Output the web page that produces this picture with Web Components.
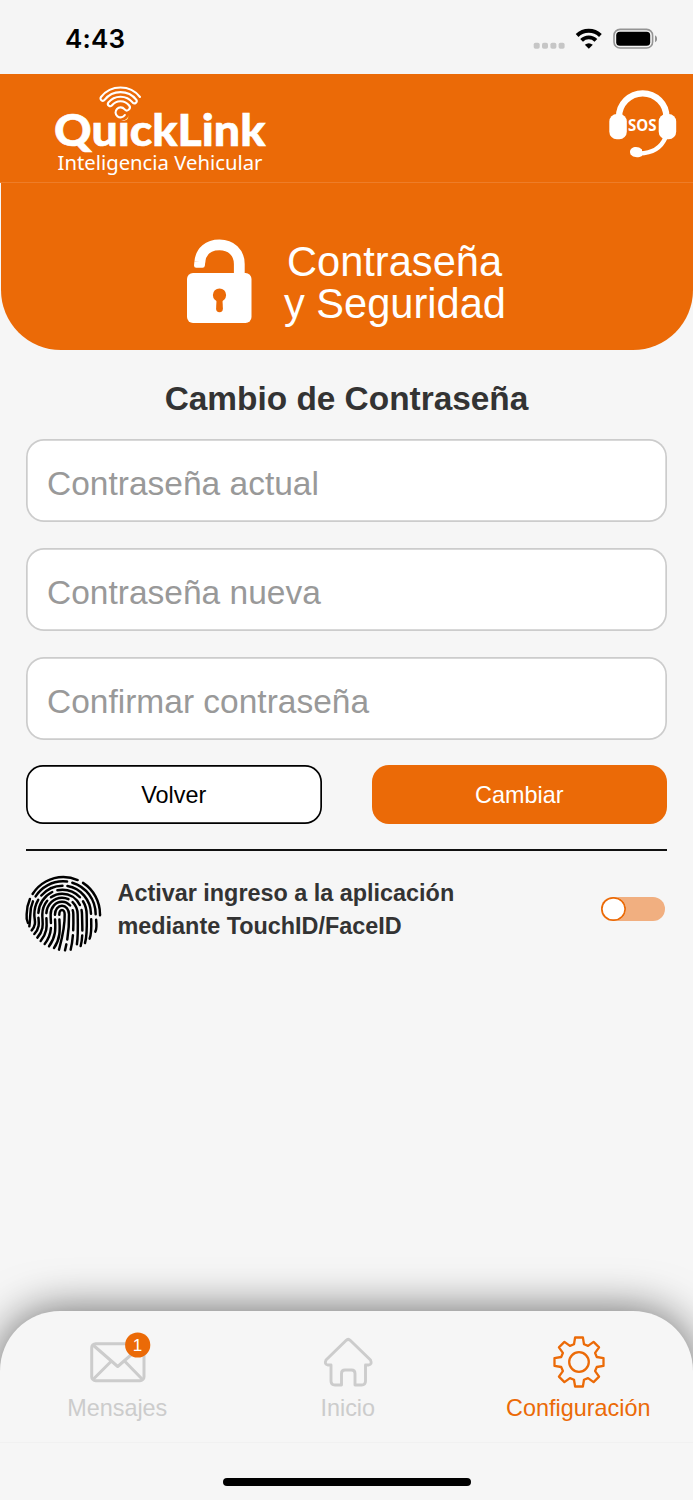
<!DOCTYPE html>
<html lang="es">
<head>
<meta charset="utf-8">
<title>QuickLink</title>
<style>
html,body{margin:0;height:100%}
body{background:#f6f6f6;font-family:"Liberation Sans",Arial,sans-serif;overflow:hidden}
</style>
</head>
<body>
<ql-app></ql-app>
<script>
const define = (name, html) => customElements.define(name, class extends HTMLElement {
  constructor() {
    super();
    const t = document.createElement('template');
    t.innerHTML = html;
    this.attachShadow({mode: 'open'}).append(t.content.cloneNode(true));
  }
});

define('ql-status', `
<style>
:host{display:flex;height:74px;box-sizing:border-box;padding:3px 36px 0 65px;align-items:center;background:#f5f5f5}
.time{font:600 26px/72px Inter,sans-serif;letter-spacing:.2px;color:#000;flex:1}
svg{display:block}
</style>
<div class="time">4:43</div>
<svg width="124" height="24" viewBox="533 26 124 24">
 <g fill="#c6c6c6"><rect x="533.7" y="41.7" width="6" height="6" rx="1.8"/><rect x="542" y="41.7" width="6" height="6" rx="1.8"/><rect x="550.4" y="41.7" width="6" height="6" rx="1.8"/><rect x="558.6" y="41.7" width="6" height="6" rx="1.8"/></g>
 <g fill="none" stroke="#000" stroke-width="3.9"><path d="M577.1 34.5a16.6 16.6 0 0 1 23.3 0"/><path d="M581.6 39.4a10 10 0 0 1 14.3 0"/></g>
 <path d="M588.8 47.8l-4-4q4-3.2 8 0z"/>
 <rect x="614" y="28.4" width="38.6" height="18.6" rx="6" fill="none" stroke="#949494" stroke-width="1.6"/>
 <rect x="616.2" y="30.8" width="34" height="14" rx="3.6"/>
 <path d="M655 34.2q2.2 1.2 2.2 3.5t-2.2 3.5z" fill="#949494"/>
</svg>`);

define('ql-header', `
<style>
:host{display:flex;height:109px;box-sizing:border-box;justify-content:space-between;padding:8px 15px 0 50px;background:#eb6a07;border-bottom:1px solid #ee7d28}
svg{display:block}
</style>
<svg width="220" height="96" viewBox="50 82 220 96">
 <g fill="#fff">
  <text x="54" y="145.6" font-family="Lato,sans-serif" font-weight="900" font-size="44.5" textLength="211.5" lengthAdjust="spacingAndGlyphs" stroke="#fff" stroke-width=".6">QuickLink</text>
  <text x="57.5" y="170.4" font-family="'Noto Sans',sans-serif" font-size="20.8" textLength="205" lengthAdjust="spacingAndGlyphs">Inteligencia Vehicular</text>
 </g>
 <circle cx="122" cy="114" r="6.6" fill="#eb6a07"/>
 <path fill="none" stroke="#fff" stroke-width="2.100" stroke-linecap="round" d="M140 97A24.800 24.800 0 0 0 101 97A2.300 2.300 0 0 0 104.600 99.900A20.200 20.200 0 0 1 136.400 99.900A2.300 2.300 0 0 1 132.800 102.700A15.600 15.600 0 0 0 108.200 102.700A2.300 2.300 0 0 0 111.800 105.500A11 11 0 0 1 129.200 105.500A3 3 0 0 1 124.400 109.200A5 5 0 1 0 124.800 115"/>
</svg>
<svg width="70" height="70" viewBox="608 88 70 70" fill="#fff" style="margin-top:7px">
 <path d="M619 116a23.7 23.7 0 0 1 47.4 0" fill="none" stroke="#fff" stroke-width="6.3"/>
 <path d="M665.5 136.5C661.5 146 652.5 152.2 639.5 152.4" fill="none" stroke="#fff" stroke-width="4.5"/>
 <rect x="609.3" y="113" width="17.5" height="25.3" rx="7.5"/><rect x="658.7" y="113" width="17.5" height="25.3" rx="7.5"/>
 <path d="M642 148.500c-4.500-4.500-12-2.500-12 2.300 0 5.600 7.500 6.600 12 4.200z"/>
 <text x="628" y="130.300" font-family="'Open Sans',sans-serif" font-weight="700" font-size="15.400" textLength="28.500" lengthAdjust="spacingAndGlyphs">SOS</text>
</svg>`);

define('ql-hero', `
<style>
:host{display:flex;height:167px;box-sizing:border-box;margin-left:1px;padding:56px 0 0 185px;background:#eb6a07;border-radius:0 0 60px 60px;color:#fff;font-size:41.600px;line-height:42px}
svg{display:block;flex:none}
h1{margin:2px 0 0 31px;font:inherit;white-space:nowrap}
h1 span{display:block}
h1 span:first-child{padding-left:3px}
</style>
<svg width="67" height="86" viewBox="186 239 67 86">
 <path d="M199.800 262C200.800 251 208.500 244.900 219.500 244.900 231 244.900 239.300 252.500 239.300 264V275" fill="none" stroke="#fff" stroke-width="10.800"/>
 <path d="M194.400 261.500L194 265.500q0 2.300 2.200 2.300h6.300q2.200 0 2.400-2.300l.4-4z" fill="#fff"/>
 <rect x="187" y="273" width="64.500" height="50" rx="6" fill="#fff"/>
 <circle cx="219.500" cy="295" r="6.600" fill="#eb6a07"/><path d="M216.600 298h5.800l.5 10.500a3.400 3.800 0 0 1-6.800 0z" fill="#eb6a07"/>
</svg>
<h1><span>Contraseña</span><span>y Seguridad</span></h1>`);

define('ql-field', `
<style>
:host{display:block;height:83px;box-sizing:border-box;box-shadow:inset 0 0 0 1.700px #ccc;border-radius:18px;background:#fff;color:#999;font-size:33.500px;line-height:90px;padding-left:21px;white-space:nowrap}
</style><slot></slot>`);

define('ql-button', `
<style>
:host{display:block;width:295.500px;height:59px;box-sizing:border-box;box-shadow:inset 0 0 0 1.700px #000;border-radius:17px;background:#fff;color:#000;font-size:23.400px;line-height:61px;text-align:center}
:host([primary]){background:#eb6a07;box-shadow:none;color:#fff}
</style><slot></slot>`);

define('ql-toggle', `
<style>
:host{display:block;width:64px;height:24px;border-radius:12px;background:#f1af80}
i{display:block;width:25px;height:24px;box-shadow:inset 0 0 0 1.700px #eb6a07;border-radius:12.500px;background:#fff}
</style><i></i>`);

// Fingerprint ridges: nested loops, each [left x, top y, right x, left end, right end, dashes].
const ridges = [
  [148, 147, 164, 132, 261, 147, 266, '88 15 400'],
  [135, 134, 177, 117, 256, 165, 268, '84 15 150 15 400'],
  [122, 122, 190, 104, 249, 182, 266, '52 15 110 16 60 15 400'],
  [109, 110, 203, 92, 240, 198, 262, '72 16 92 15 130 16 400'],
  [97, 98, 216, 82, 230, 212, 255, '118 15 102 15 62 15 400'],
  [85, 86, 230, 73, 219, 225, 246, '52 15 78 16 74 15 134 15 400'],
  [73, 74, 243, 65, 208, 239, 233, '96 16 72 15 118 16 400'],
  [61, 61, 257, 58, 196, 256, 212, '76 17 110 16 126 16 400'],
  [50, 48, 270, 54, 186, 270, 163, '74 17 154 18 400']
].map(([l, t, r, bx, by, ex, ey, dash], k) =>
  `<path stroke-dasharray="${dash}" d="M${bx} ${by}C${k < 7 ? l + 9 : l - 1} ${by - Math.min(36, (by - 160) * .4)} ${l - 1} ${160 + (by - 160) * .3} ${l} 160A${(r - l) / 2} ${160 - t} 0 0 1 ${r} 160C${r + 1} ${160 + (ey - 160) * .4} ${ex + 7 * (k < 8)} ${ey - (ey - 160) * .25} ${ex} ${ey}"/>`
).join('');
define('ql-fingerprint', `
<style>:host{display:block}svg{display:block}</style>
<svg width="78" height="78" viewBox="42 42 234 234" fill="none" stroke="#000" stroke-width="7.400" stroke-linecap="round">${ridges}</svg>`);

define('ql-tab', `
<style>
:host{display:flex;flex-direction:column;align-items:center;width:230.500px;color:#ccc;font-size:23.400px;line-height:28px;padding-top:22px;box-sizing:border-box}
:host([active]){color:#eb6a07}
.icon{height:61px}
</style><div class="icon"><slot name="icon"></slot></div><slot></slot>`);

define('ql-tabbar', `
<style>
:host{display:block;box-sizing:border-box;height:189px;background:#f6f6f6;border-radius:60px 60px 0 0;box-shadow:0 0 45px rgba(0,0,0,.600)}
nav{display:flex;height:132px;box-sizing:border-box;padding-left:2px;border-bottom:1px solid #f1f1f1}
ql-tab{flex:none}
svg{display:block;overflow:visible}
.home{width:248px;height:8px;border-radius:4px;background:#000;margin:35px auto 0}
</style>
<nav>
<ql-tab>
 <svg slot="icon" width="62" height="54" viewBox="88 1333 62 54" style="margin-left:4px">
  <g fill="none" stroke="#ccc" stroke-width="3" stroke-linejoin="round"><rect x="91.700" y="1343.700" width="52.300" height="37" rx="4"/><path d="M93 1345l24.700 21.500L142.500 1345M93 1379.500l18-18M142.500 1379.500l-17.500-18"/></g>
  <circle cx="137.700" cy="1345" r="12.600" fill="#eb6a07"/><text x="137.500" y="1351" text-anchor="middle" font-family="Liberation Sans,sans-serif" font-size="17" fill="#fff">1</text>
 </svg>Mensajes</ql-tab>
<ql-tab>
 <svg slot="icon" width="54" height="54" viewBox="321 1332.500 54 54" fill="none" stroke="#ccc" stroke-width="2.900" stroke-linejoin="round">
  <path d="M346 1340q2.200-2.200 4.400 0L370.500 1359.500q2 4.500-2 5h-3v16q0 4-4 4h-6.500V1373q0-3.500-3.500-3.500h-6.500q-3.500 0-3.500 3.500v11.500H335q-4 0-4-4v-16h-3q-4-.500-2-5z"/>
 </svg>Inicio</ql-tab>
<ql-tab active>
 <svg slot="icon" width="54" height="54" viewBox="-28 -29 54 54" fill="none" stroke="#eb6a07" stroke-width="2.300" stroke-linejoin="round">
  <circle r="9.800"/>
  <path id="gear"/>
 </svg>Configuración</ql-tab>
</nav>
<div class="home"></div>`);

define('ql-app', `
<style>
:host{display:flex;flex-direction:column;height:1500px;width:693px;background:#f6f6f6}
h2{margin:28px 0 0;font-size:33.400px;line-height:42px;text-align:center;color:#333;font-weight:700}
main{padding:0 26px;flex:1}
.fields{display:flex;flex-direction:column;gap:26px;margin-top:19px}
.actions{display:flex;justify-content:space-between;margin-top:25px}
hr{border:0;height:2px;background:#111;margin:25px 0 0}
.bio{display:flex;align-items:center;margin-top:24px}
.bio p{margin:-9px 0 0 15.500px;flex:1;font-size:23.400px;line-height:33px;font-weight:700;color:#333;white-space:nowrap}
.bio ql-toggle{margin:-10px 2px 0 0}
ql-fingerprint{margin-left:-2px}
</style>
<ql-status></ql-status>
<ql-header></ql-header>
<ql-hero></ql-hero>
<main>
<h2>Cambio de Contraseña</h2>
<div class="fields"><ql-field>Contraseña actual</ql-field><ql-field>Contraseña nueva</ql-field><ql-field>Confirmar contraseña</ql-field></div>
<div class="actions"><ql-button>Volver</ql-button><ql-button primary>Cambiar</ql-button></div>
<hr>
<div class="bio"><ql-fingerprint></ql-fingerprint><p>Activar ingreso a la aplicación<br>mediante TouchID/FaceID</p><ql-toggle></ql-toggle></div>
</main>
<ql-tabbar></ql-tabbar>`);

// The cog outline repeats one tooth profile eight times around the hub.
const bar = document.querySelector('ql-app').shadowRoot.querySelector('ql-tabbar').shadowRoot;
let d = '';
for (let k = 0; k < 8; k++) {
  const a = k * Math.PI / 4;
  for (const [x, y] of [[-5, -17.8], [-3.900, -24.500], [3.900, -24.500], [5, -17.800]]) {
    const px = x * Math.cos(a) - y * Math.sin(a), py = x * Math.sin(a) + y * Math.cos(a);
    d += (d ? 'L' : 'M') + px.toFixed(2) + ' ' + py.toFixed(2);
  }
}
bar.querySelector('#gear').setAttribute('d', d + 'Z');
</script>
</body>
</html>
